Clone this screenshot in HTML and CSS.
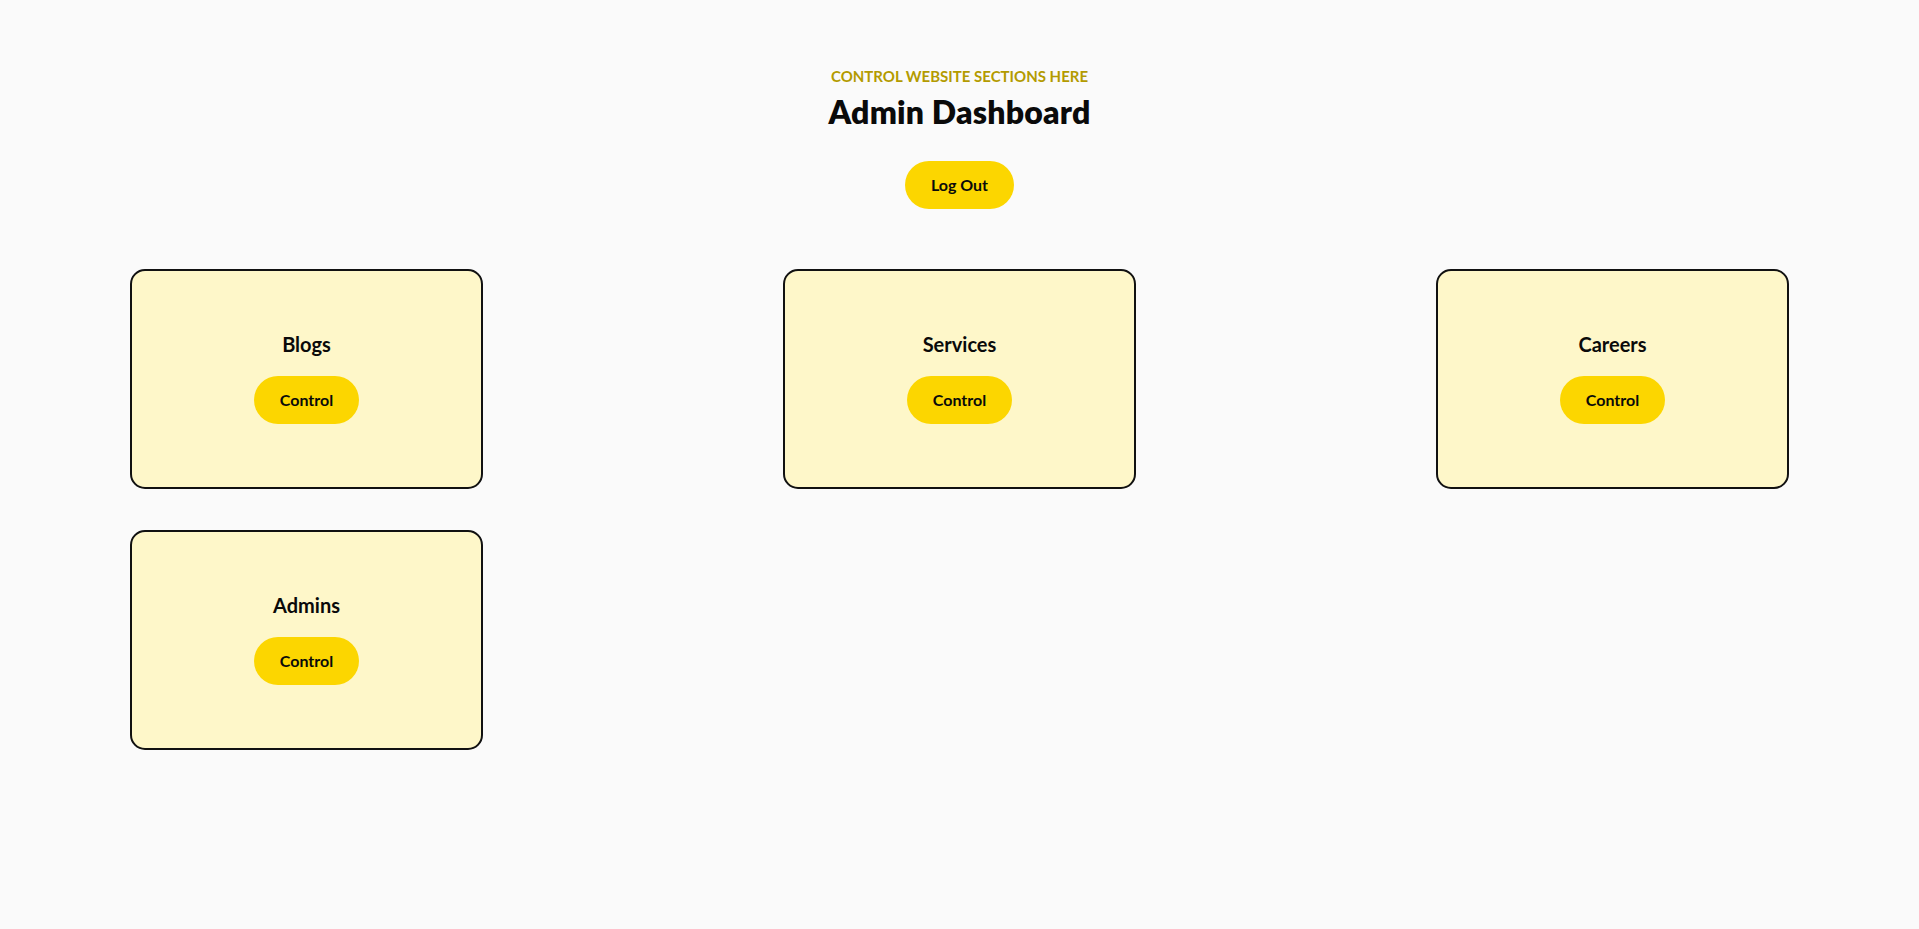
FILE: index.html
```html
<!DOCTYPE html>
<html lang="en">
<head>
<meta charset="utf-8">
<title>Admin Dashboard</title>
<link rel="stylesheet" href="styles.css">
</head>
<body>
<main class="page">
  <header class="header">
    <p class="eyebrow">CONTROL WEBSITE SECTIONS HERE</p>
    <h1 class="title">Admin Dashboard</h1>
    <button class="pill logout">Log Out</button>
  </header>
  <section class="cards">
    <div class="card">
      <h2 class="card-title">Blogs</h2>
      <button class="pill">Control</button>
    </div>
    <div class="card">
      <h2 class="card-title">Services</h2>
      <button class="pill">Control</button>
    </div>
    <div class="card">
      <h2 class="card-title">Careers</h2>
      <button class="pill">Control</button>
    </div>
    <div class="card">
      <h2 class="card-title">Admins</h2>
      <button class="pill">Control</button>
    </div>
  </section>
</main>
</body>
</html>
```
FILE: styles.css
```css
* { box-sizing: border-box; }
html, body {
  margin: 0;
  background: #fafafa;
  font-family: Lato, "Open Sans", "Liberation Sans", sans-serif;
  color: #0a0a0a;
}
.page {
  padding-top: 66px;
}
.header {
  display: flex;
  flex-direction: column;
  align-items: center;
}
.eyebrow {
  margin: 0;
  font-size: 15px;
  line-height: 20px;
  font-weight: 700;
  color: #b39b00;
}
.title {
  margin: 6px 0 0;
  font-size: 32px;
  line-height: 40px;
  font-weight: 800;
  letter-spacing: 0.2px;
}
.pill {
  border: none;
  background: #fcd600;
  color: #0a0a0a;
  font-family: inherit;
  font-weight: 700;
  font-size: 16px;
  line-height: 24px;
  padding: 12px 26px;
  border-radius: 999px;
  cursor: pointer;
}
.logout {
  margin-top: 29px;
}
.cards {
  margin-top: 60px;
  padding: 0 130px;
  display: grid;
  grid-template-columns: repeat(3, 1fr);
  row-gap: 41px;
}
.card {
  width: 353px;
  height: 220px;
  border: 2px solid #111;
  border-radius: 15px;
  background: #fef7c9;
  display: flex;
  flex-direction: column;
  align-items: center;
  justify-content: center;
  gap: 18px;
  padding-bottom: 4px;
}
.card:nth-child(3n+2) { justify-self: center; }
.card:nth-child(3n) { justify-self: end; }
.card-title {
  margin: 0;
  font-size: 20px;
  line-height: 28px;
  font-weight: 700;
}
```
